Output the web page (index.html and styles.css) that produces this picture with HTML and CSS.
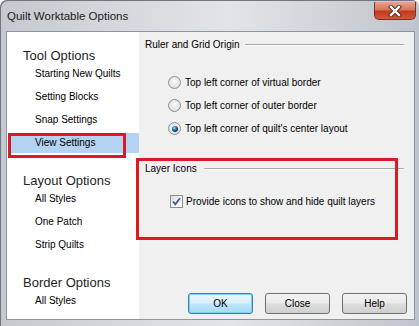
FILE: index.html
```html
<!DOCTYPE html>
<html>
  <head>
    <meta http-equiv="Content-Type" content="text/html; charset=utf-8"/>
    <title>Quilt Worktable Options</title>
    <link rel="stylesheet" href="styles.css">
  </head>
  <body>
  <div class="window">

    <div class="titlebar">
      <p class="title">Quilt Worktable Options</p>
      <div class="close_btn">
        <svg width="16" height="12" viewBox="0 0 16 12">
          <path d="M4 2 L12 10 M12 2 L4 10" stroke="#5a2418" stroke-width="4.2" stroke-linecap="square"/>
          <path d="M4 2 L12 10 M12 2 L4 10" stroke="#ffffff" stroke-width="2.4" stroke-linecap="square"/>
        </svg>
      </div>
    </div>

    <div class="client">

      <div class="sidebar">
        <div class="group">
          <p class="heading">Tool Options</p>
          <p class="item">Starting New Quilts</p>
          <p class="item">Setting Blocks</p>
          <p class="item">Snap Settings</p>
          <p class="item selected">View Settings</p>
        </div>
        <div class="group">
          <p class="heading">Layout Options</p>
          <p class="item">All Styles</p>
          <p class="item">One Patch</p>
          <p class="item">Strip Quilts</p>
        </div>
        <div class="group">
          <p class="heading">Border Options</p>
          <p class="item">All Styles</p>
        </div>
      </div>

      <div class="content">
        <div class="group_title first">
          <span>Ruler and Grid Origin</span>
          <span class="rule"></span>
        </div>
        <div class="options">
          <div class="option"><span class="radio"></span><span>Top left corner of virtual border</span></div>
          <div class="option"><span class="radio"></span><span>Top left corner of outer border</span></div>
          <div class="option"><span class="radio checked"></span><span>Top left corner of quilt's center layout</span></div>
        </div>

        <div class="group_title second">
          <span>Layer Icons</span>
          <span class="rule"></span>
        </div>
        <div class="option check_row">
          <span class="checkbox">
            <svg width="11" height="11" viewBox="0 0 11 11">
              <path d="M2 5.5 L4.3 8.3 L9 2.2" fill="none" stroke="#3a5a9c" stroke-width="1.8"/>
            </svg>
          </span>
          <span>Provide icons to show and hide quilt layers</span>
        </div>

        <div class="buttons">
          <div class="button default">OK</div>
          <div class="button">Close</div>
          <div class="button">Help</div>
        </div>
      </div>

    </div>

    <!-- red annotation boxes -->
    <div class="mark mark_view"></div>
    <div class="mark mark_layer"></div>

  </div>
  </body>
</html>
```

FILE: styles.css
```css
body { margin: 0; width: 419px; height: 326px; overflow: hidden; background: #ffffff; }
p { margin: 0; }

.window {
  position: relative;
  box-sizing: border-box;
  width: 419px;
  height: 326px;
  padding: 0 4px 6px 6px;
  display: flex;
  flex-direction: column;
  border-radius: 7px 7px 0 0;
  box-shadow: inset 1px 1px 0 #6f767e;
  background: linear-gradient(90deg, #c4c9cf 0%, #d3d7db 25%, #e2e4e7 55%, #cfd3d8 80%, #bfc5cc 100%);
}

.titlebar { height: 31px; display: flex; align-items: flex-start; }
.title {
  font-family: "Liberation Sans", Arial, sans-serif;
  font-size: 11.5px;
  color: #1b1b1b;
  line-height: 32px;
  padding-left: 1px;
}
.close_btn {
  margin-left: auto;
  margin-top: 2px;
  margin-right: -1px;
  width: 42px;
  height: 18px;
  box-sizing: border-box;
  border: 1px solid #7a3326;
  border-top: none;
  border-radius: 0 0 5px 5px;
  background: linear-gradient(180deg, #e9a491 0%, #d97358 45%, #c4391d 55%, #d2573a 100%);
  display: flex;
  align-items: center;
  justify-content: center;
}

.client {
  flex: 1;
  min-height: 0;
  display: flex;
  border: 1px solid #8c96a0;
  background: #f0f0f0;
}

/* left list */
.sidebar {
  width: 132px;
  background: #ffffff;
  padding-top: 16px;
  overflow: hidden;
  font-family: "Liberation Sans", Arial, sans-serif;
}
.group { margin-bottom: 20px; }
.group:last-child { margin-bottom: 0; }
.heading { font-size: 13px; line-height: 16px; padding-left: 16px; color: #1e1e1e; }
.item { font-size: 10px; line-height: 20px; margin: 0 0 3px 1px; padding-left: 27px; color: #000; }
.item.selected { background: #b4d3f2; }

/* right page */
.content {
  flex: 1;
  display: flex;
  flex-direction: column;
  padding: 6px 7px 5px 6px;
  font-family: "Liberation Sans", Arial, sans-serif;
  font-size: 10px;
  color: #000;
}
.group_title { display: flex; align-items: center; line-height: 13px; padding-right: 3px; }
.group_title .rule {
  flex: 1;
  margin-left: 6px;
  border-top: 1px solid #a9a9a9;
  border-bottom: 1px solid #ffffff;
}
.group_title.second .rule { margin-left: 7px; }
.options { margin-top: 20px; }
.option { display: flex; align-items: center; height: 23px; padding-left: 23px; }
.option .radio {
  width: 13px;
  height: 13px;
  box-sizing: border-box;
  border-radius: 50%;
  border: 1px solid #8d9091;
  background: radial-gradient(circle at 50% 40%, #fafafa 0, #e4e4e4 60%, #cfcfcf 100%);
  margin-right: 4px;
  display: flex;
  align-items: center;
  justify-content: center;
}
.option .radio.checked::after {
  content: "";
  width: 6px;
  height: 6px;
  border-radius: 50%;
  background: radial-gradient(circle at 40% 35%, #a8e6ff 0, #2d8cc0 1.6px, #103f66 3px);
}
.group_title.second { margin-top: 22px; }
.check_row { margin-top: 15px; padding-left: 25px; }
.checkbox {
  width: 13px;
  height: 13px;
  box-sizing: border-box;
  border: 1px solid #8d9091;
  background: linear-gradient(135deg, #dcdcdc 0%, #f6f6f6 60%, #ffffff 100%);
  margin-right: 3px;
  display: flex;
  align-items: center;
  justify-content: center;
}
.checkbox svg { display: block; }

.buttons { margin-top: auto; display: flex; justify-content: flex-end; gap: 12px; }
.button {
  width: 65px;
  height: 21px;
  box-sizing: border-box;
  border: 1px solid #707070;
  border-radius: 3px;
  background: linear-gradient(180deg, #f2f2f2 0%, #ebebeb 48%, #dddddd 52%, #cfcfcf 100%);
  display: flex;
  align-items: center;
  justify-content: center;
  font-size: 10px;
}
.button.default {
  border-color: #3c7fb1;
  box-shadow: inset 0 0 0 1px #7ed0f2;
  background: linear-gradient(180deg, #eaf6fd 0%, #d9f0fc 48%, #bee6fd 52%, #a7d9f5 100%);
}

/* annotation overlay */
.mark { position: absolute; border: 3px solid #dd1a24; box-sizing: border-box; }
.mark_view { left: 8px; top: 133px; width: 118px; height: 25px; }
.mark_layer { left: 136px; top: 158px; width: 262px; height: 82px; }
```
